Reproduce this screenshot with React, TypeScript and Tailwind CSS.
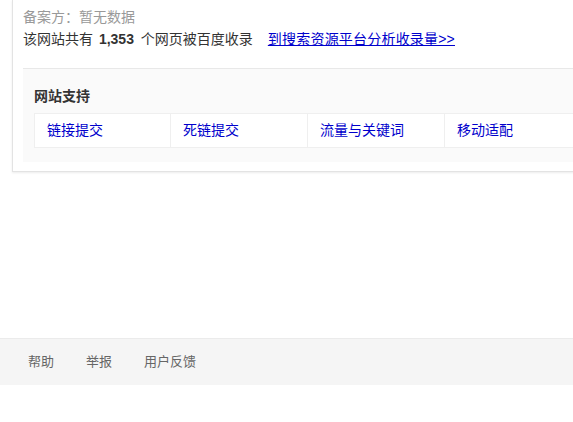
import React from 'react';

const supportLinks = ['链接提交', '死链提交', '流量与关键词', '移动适配'];
const footerLinks = ['帮助', '举报', '用户反馈'];

function App() {
  return (
    <div
      className="h-[422px] w-[573px] overflow-hidden bg-white"
      style={{ fontFamily: 'Arial, "Liberation Sans", "Noto Sans CJK SC", sans-serif' }}
    >
      <div className="ml-[12px] w-[640px] border-b border-l border-[#e3e3e3] px-[10px] pb-[9px] pt-[6px] shadow-[0_1px_2px_rgba(0,0,0,0.08)]">
        <p className="text-[14px] leading-[22px] text-[#999]">备案方：暂无数据</p>
        <p className="text-[14px] leading-[22px] text-[#333]">
          该网站共有 <b className="ml-[2px] mr-[3px] font-bold">1,353</b> 个网页被百度收录
          <a href="#" className="ml-[15px] tracking-[0.2px] text-[#00c] underline">
            到搜索资源平台分析收录量&gt;&gt;
          </a>
        </p>

        <div className="mt-[18px] border-t border-[#e8e8e8] bg-[#fafafa] pb-[14px] pl-[11px] pt-[16px]">
          <h3 className="text-[14px] font-bold leading-[22px] text-[#333]">网站支持</h3>
          <div className="mt-[6px] flex">
            {supportLinks.map((label, i) => (
              <a
                key={label}
                href="#"
                className={`block w-[137px] shrink-0 border-y border-r border-[#efefef] bg-white pl-[12px] text-[14px] leading-[33px] text-[#00c] ${
                  i === 0 ? 'border-l' : ''
                }`}
              >
                {label}
              </a>
            ))}
          </div>
        </div>
      </div>

      <div className="mt-[166px] flex h-[47px] items-center gap-[32px] border-t border-[#ebebeb] bg-[#f5f5f5] pl-[28px]">
        {footerLinks.map((label) => (
          <a key={label} href="#" className="text-[13px] text-[#666]">
            {label}
          </a>
        ))}
      </div>
    </div>
  );
}

export default App;
